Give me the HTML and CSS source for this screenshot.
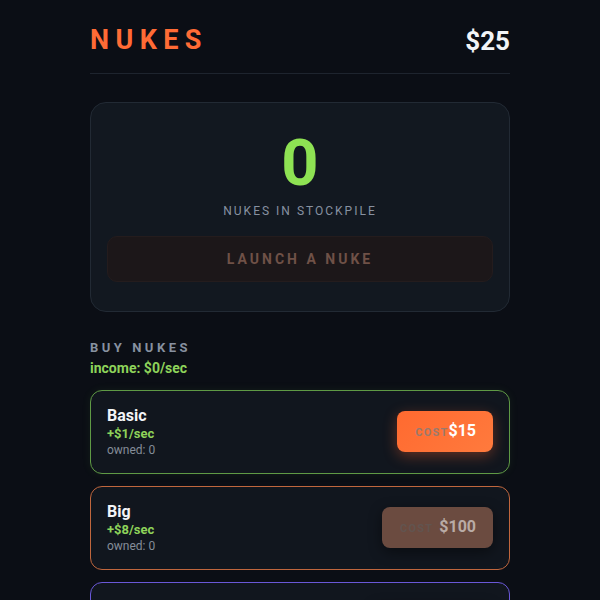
FILE: index.html
```html
<!DOCTYPE html>
<html lang="en">
<head>
    <meta charset="UTF-8">
    <meta name="viewport" content="width=device-width, initial-scale=1.0">
    <title>Nukes</title>
    <link rel="stylesheet" href="styles.css">
</head>
<body>

    <div id="app">
        <!-- Header -->
        <div class="header">
            <div class="title">NUKES</div>
            <div class="money">$25</div>
        </div>

        <!-- Stockpile -->
        <div class="stockpile">
            <div class="count">0</div>
            <div class="count-label">NUKES IN STOCKPILE</div>
            <button class="launch" disabled>LAUNCH A NUKE</button>
        </div>

        <!-- Shop -->
        <div class="shop-title">BUY NUKES</div>
        <div class="income">income: $0/sec</div>

        <div class="items">
            <div class="item item-basic">
                <div class="item-info">
                    <div class="item-name">Basic</div>
                    <div class="item-rate">+$1/sec</div>
                    <div class="item-owned">owned: 0</div>
                </div>
                <button class="buy"><span class="buy-label">COST</span>$15</button>
            </div>

            <div class="item item-big">
                <div class="item-info">
                    <div class="item-name">Big</div>
                    <div class="item-rate">+$8/sec</div>
                    <div class="item-owned">owned: 0</div>
                </div>
                <button class="buy" disabled><span class="buy-label">COST</span>$100</button>
            </div>

            <div class="item item-mega">
                <div class="item-info">
                    <div class="item-name">Mega</div>
                    <div class="item-rate">+$50/sec</div>
                    <div class="item-owned">owned: 0</div>
                </div>
                <button class="buy" disabled><span class="buy-label">COST</span>$1000</button>
            </div>
        </div>
    </div>

</body>
</html>
```

FILE: styles.css
```css
* {
    margin: 0;
    padding: 0;
    box-sizing: border-box;
}

body {
    background-color: #0b0e15;
    color: #f2f4f7;
    font-family: Roboto, "Liberation Sans", Arial, sans-serif;
    overflow: hidden;
}

#app {
    max-width: 420px;
    margin: 0 auto;
    padding-top: 24px;
}

.header {
    display: flex;
    justify-content: space-between;
    align-items: center;
    padding-bottom: 15px;
    border-bottom: 1px solid #1e242e;
}

.title {
    color: #ff6b35;
    font-size: 27px;
    font-weight: bold;
    letter-spacing: 6.4px;
    line-height: 1.25;
}

.money {
    font-size: 26px;
    font-weight: bold;
    line-height: 1.25;
}

/* Stockpile card */
.stockpile {
    margin-top: 28px;
    padding: 28px 16px 29px;
    background-color: #121820;
    border: 1px solid #222a34;
    border-radius: 16px;
    text-align: center;
}

.count {
    color: #8ee253;
    font-size: 65px;
    font-weight: bold;
    line-height: 1;
}

.count-label {
    margin-top: 8px;
    color: #8791a0;
    font-size: 12px;
    letter-spacing: 2px;
}

.launch {
    display: block;
    width: 100%;
    margin-top: 18px;
    padding: 14px 0;
    background-color: #1c1719;
    border: 1px solid #241c1d;
    border-radius: 10px;
    color: #6f5147;
    font-family: inherit;
    font-size: 14px;
    font-weight: bold;
    letter-spacing: 3px;
}

/* Shop */
.shop-title {
    margin-top: 28px;
    color: #8791a0;
    font-size: 13px;
    font-weight: bold;
    letter-spacing: 3.5px;
    line-height: 16px;
}

.income {
    margin-top: 4px;
    color: #8ed35a;
    font-size: 14px;
    font-weight: bold;
    line-height: 16px;
}

.items {
    display: flex;
    flex-direction: column;
    gap: 12px;
    margin-top: 14px;
}

.item {
    display: flex;
    justify-content: space-between;
    align-items: center;
    padding: 15px 16px;
    background-color: #11161e;
    border: 1px solid #2a313b;
    border-radius: 12px;
}

.item-basic {
    border-color: #5f9a45;
    box-shadow: 0 0 10px rgba(120, 200, 80, 0.08);
}

.item-big {
    border-color: #c0663d;
}

.item-mega {
    border-color: #6a58d8;
}

.item-name {
    font-size: 16px;
    font-weight: bold;
    line-height: 20px;
}

.item-rate {
    color: #8ed35a;
    font-size: 13px;
    font-weight: bold;
    line-height: 16px;
}

.item-owned {
    color: #858d99;
    font-size: 12px;
    line-height: 16px;
}

.buy {
    padding: 10px 17px 10px 18px;
    background: linear-gradient(135deg, #ff6a30, #ff7a3d);
    border: none;
    border-radius: 8px;
    color: #fff;
    font-family: inherit;
    font-size: 16px;
    font-weight: bold;
    line-height: 19px;
    box-shadow: 0 4px 14px rgba(255, 100, 45, 0.35);
    cursor: pointer;
}

.buy-label {
    color: rgba(125, 125, 125, 0.8);
    font-size: 11px;
    letter-spacing: 1.2px;
}

.buy:disabled {
    background: #6b4b40;
    color: #b9aba6;
    box-shadow: 0 4px 14px rgba(0, 0, 0, 0.45);
    cursor: default;
}

.buy:disabled .buy-label {
    margin-right: 6px;
    color: #62544f;
}
```
